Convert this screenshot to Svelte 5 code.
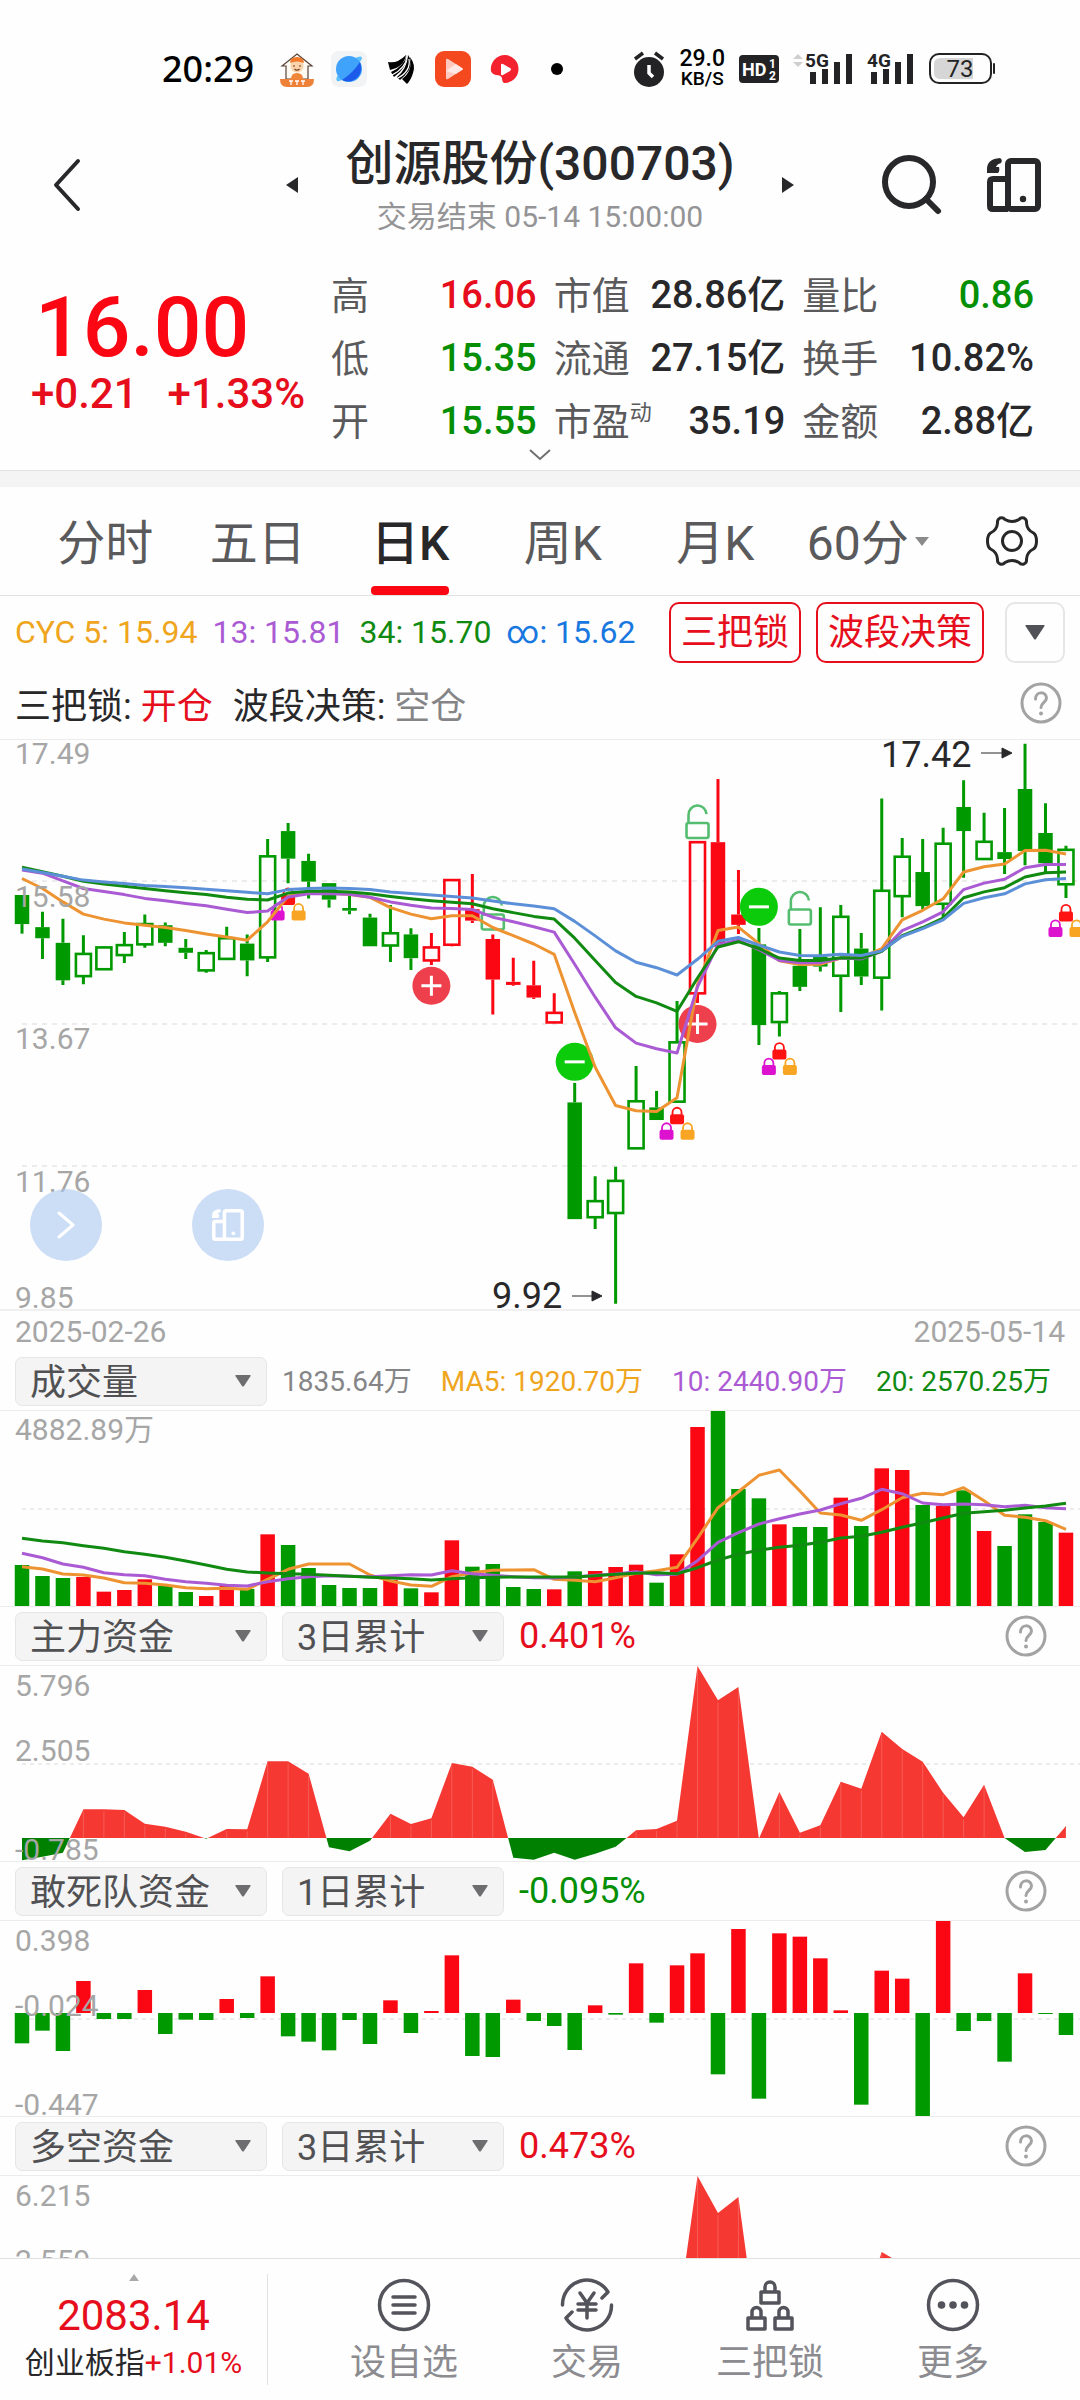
<script>
  const stats = [
    { label: '高', value: '16.06', tone: 'up' },
    { label: '市值', value: '28.86亿', tone: '' },
    { label: '量比', value: '0.86', tone: 'down' },
    { label: '低', value: '15.35', tone: 'down' },
    { label: '流通', value: '27.15亿', tone: '' },
    { label: '换手', value: '10.82%', tone: '' },
    { label: '开', value: '15.55', tone: 'down' },
    { label: '市盈', sup: '动', value: '35.19', tone: '' },
    { label: '金额', value: '2.88亿', tone: '' }
  ];

  const tabs = ['分时', '五日', '日K', '周K', '月K'];
  let activeTab = $state('日K');

  const GREEN = '#009900';
  const RED = '#fb0613';
  const STEP = 20.47;
  const cx = (i) => 22 + i * STEP;
  const line = (ys) => ys.map((v, i) => `${cx(i).toFixed(1)},${v.toFixed(1)}`).join(' ');

  // Depth below the chart's top edge, 1487 steps over the full height
  const ky = (v) => v * 0.3827;

  // kind (lowercase solid, uppercase hollow), high, body top, body bottom, low
  const candles = [
    ['g', 405, 405, 481, 506], ['g', 449, 489, 518, 572], ['g', 467, 530, 628, 640], ['G', 510, 559, 617, 638],
    ['G', 540, 542, 599, 600], ['G', 502, 536, 562, 583], ['G', 456, 481, 534, 543], ['g', 477, 484, 530, 539],
    ['g', 520, 543, 556, 572], ['G', 549, 557, 602, 608], ['G', 488, 518, 572, 573], ['g', 508, 532, 576, 617],
    ['G', 259, 304, 568, 580], ['g', 217, 238, 310, 374], ['g', 297, 316, 370, 414], ['g', 374, 374, 417, 438],
    ['g', 405, 439, 446, 455], ['g', 454, 464, 539, 539], ['G', 431, 505, 537, 580], ['g', 492, 508, 570, 601],
    ['R', 504, 542, 576, 588], ['R', 366, 366, 535, 539], ['r', 350, 442, 472, 478], ['r', 508, 520, 626, 717],
    ['r', 569, 632, 640, 642], ['r', 577, 641, 673, 677], ['R', 662, 713, 738, 740], ['g', 896, 947, 1252, 1252],
    ['G', 1140, 1205, 1247, 1278], ['G', 1115, 1152, 1236, 1473], ['G', 852, 944, 1067, 1068], ['g', 917, 960, 993, 993],
    ['G', 682, 790, 945, 946], ['R', 267, 267, 662, 687], ['r', 102, 267, 540, 540], ['r', 340, 456, 483, 507],
    ['g', 491, 534, 745, 797], ['G', 656, 662, 737, 775], ['g', 494, 590, 645, 656], ['g', 437, 566, 592, 605],
    ['G', 431, 462, 616, 711], ['g', 504, 545, 618, 640], ['G', 153, 394, 621, 707], ['G', 256, 305, 408, 463],
    ['g', 259, 345, 434, 442], ['G', 229, 271, 428, 470], ['g', 105, 175, 238, 360], ['G', 190, 266, 311, 312],
    ['g', 178, 293, 311, 350], ['g', 10, 128, 290, 327], ['g', 165, 243, 322, 350], ['G', 276, 287, 377, 413]
  ].map(([kind, high, top, bottom, low], i) => ({
    x: cx(i),
    hollow: kind === 'G' || kind === 'R',
    color: kind.toLowerCase() === 'g' ? GREEN : RED,
    high: ky(high), top: ky(top), bottom: ky(bottom), low: ky(low)
  }));

  const costLines = [
    { color: '#ee9331', ys: [362, 388, 423, 455, 468, 478, 484, 490, 498, 507, 515, 523, 475, 408, 400, 400, 404, 411, 438, 455, 467, 459, 459, 490, 511, 533, 560, 712, 855, 955, 969, 971, 935, 640, 498, 489, 532, 577, 587, 586, 570, 568, 545, 470, 445, 415, 345, 331, 324, 289, 288, 298] },
    { color: '#aa5bd4', ys: [340, 348, 368, 388, 396, 404, 414, 420, 427, 433, 442, 451, 447, 410, 402, 402, 403, 411, 423, 432, 439, 440, 443, 463, 475, 488, 502, 586, 672, 752, 792, 807, 818, 645, 535, 523, 548, 576, 582, 582, 570, 572, 552, 498, 475, 449, 391, 374, 364, 334, 325, 325] },
    { color: '#118a11', ys: [332, 344, 356, 369, 376, 382, 388, 394, 399, 404, 411, 416, 418, 400, 395, 395, 397, 402, 409, 415, 420, 424, 428, 441, 451, 461, 468, 518, 576, 634, 670, 687, 709, 622, 541, 527, 545, 570, 576, 576, 569, 570, 552, 511, 490, 465, 412, 397, 386, 358, 347, 345] },
    { color: '#5b8fd8', ys: [337, 346, 356, 366, 371, 375, 380, 383, 386, 390, 394, 398, 402, 391, 388, 387, 388, 391, 397, 401, 405, 409, 413, 421, 428, 434, 441, 474, 512, 551, 581, 595, 614, 573, 526, 516, 536, 554, 563, 564, 560, 563, 551, 513, 493, 470, 427, 412, 402, 376, 365, 362] }
  ].map((l) => ({ color: l.color, points: line(l.ys.map(ky)) }));

  const lockGroups = [[13, 384], [32, 957], [37, 788], [51, 427]].map(([i, y]) => ({ x: cx(i), y: ky(y) }));
  const openLocks = [[23, 409], [33, 170], [38, 396]].map(([i, y]) => ({ x: cx(i), y: ky(y) }));
  const signals = [
    { x: cx(20), y: ky(642), buy: true },
    { x: cx(33), y: ky(742), buy: true },
    { x: cx(27), y: ky(841), buy: false },
    { x: cx(36), y: ky(436), buy: false }
  ];

  // Volume: distance from the chart's top edge in thirds of a unit
  const vy = (v) => (v - 363) / 3;
  const volume = [
    ['g', 825], ['g', 858], ['g', 864], ['r', 861], ['r', 905], ['r', 900], ['r', 868], ['g', 888], ['g', 906],
    ['r', 918], ['r', 888], ['g', 897], ['r', 733], ['g', 765], ['g', 834], ['g', 885], ['g', 894], ['g', 894],
    ['r', 870], ['g', 895], ['r', 907], ['r', 751], ['g', 830], ['g', 822], ['g', 891], ['g', 897], ['r', 898],
    ['g', 844], ['r', 843], ['r', 831], ['r', 824], ['g', 878], ['r', 793], ['r', 411], ['g', 363], ['g', 597],
    ['g', 625], ['r', 703], ['g', 711], ['g', 711], ['r', 623], ['g', 708], ['r', 535], ['r', 540], ['g', 645],
    ['r', 648], ['g', 601], ['r', 723], ['g', 768], ['g', 673], ['g', 696], ['r', 728]
  ].map(([k, v], i) => ({ x: cx(i), y: vy(v), color: k === 'g' ? GREEN : RED }));

  const volumeLines = [
    { color: '#ee9331', ys: [830, 837, 852, 855, 864, 878, 880, 885, 893, 896, 895, 898, 868, 838, 822, 822, 822, 855, 873, 885, 889, 860, 848, 841, 840, 839, 868, 871, 875, 863, 850, 842, 832, 745, 653, 605, 556, 540, 603, 669, 675, 691, 659, 623, 610, 614, 593, 632, 676, 682, 692, 718] },
    { color: '#aa5bd4', ys: [790, 803, 822, 832, 848, 854, 857, 868, 875, 880, 886, 888, 875, 866, 860, 857, 859, 860, 857, 854, 855, 842, 851, 856, 860, 863, 864, 861, 856, 852, 845, 854, 853, 812, 757, 728, 702, 686, 672, 660, 641, 625, 598, 611, 639, 644, 642, 644, 650, 646, 653, 656] },
    { color: '#118a11', ys: [745, 753, 758, 767, 775, 785, 793, 802, 813, 825, 838, 846, 849, 851, 853, 856, 859, 862, 864, 866, 870, 866, 863, 862, 861, 861, 861, 861, 857, 853, 850, 848, 851, 833, 810, 793, 781, 772, 766, 757, 744, 739, 727, 712, 698, 684, 670, 665, 661, 654, 648, 640] }
  ].map((l) => ({ color: l.color, points: line(l.ys.map(vy)) }));

  const area = (ys, zero) => `${cx(0)},${zero} ${line(ys)} ${cx(ys.length - 1)},${zero}`;

  const MAIN_ZERO = 172;
  const mainFlow = [751, 740, 728, 598, 598, 600, 641, 650, 665, 686, 657, 658, 454, 454, 491, 712, 724, 692, 611, 642, 625, 459, 470, 509, 743, 749, 728, 749, 731, 710, 661, 657, 632, 168, 271, 231, 686, 546, 668, 646, 515, 536, 365, 417, 455, 548, 622, 524, 684, 726, 720, 648]
    .map((v) => (v - 168) / 3);

  const LONG_ZERO = 166;
  const longFlow = mainFlow.map((v, i) => {
    const peaks = { 32: 146, 33: 0, 34: 37, 35: 21, 36: 172, 41: 138, 42: 76, 43: 88, 44: 101 };
    return i in peaks ? peaks[i] : Math.max(v, 120);
  });

  const DARE_ZERO = 92;
  const dareFlow = [550, 512, 573, 363, 477, 477, 390, 522, 479, 480, 417, 474, 349, 529, 545, 571, 480, 552, 421, 519, 453, 286, 588, 591, 419, 483, 498, 570, 436, 464, 310, 488, 316, 280, 643, 207, 716, 220, 230, 295, 451, 734, 332, 356, 768, 183, 513, 483, 605, 340, 462, 525]
    .map((v, i) => ({ x: cx(i), y: (v - 183) / 3 }));

  dareFlow[20].y = 90;
</script>

{#snippet phoneIcon()}
  <svg viewBox="0 0 54 54" fill="none" stroke="currentColor" stroke-width="6" stroke-linejoin="round" aria-hidden="true">
    <rect x="21" y="3" width="30" height="48" rx="3" />
    <path d="M21 21H6q-3 0-3 3v24q0 3 3 3h15" />
    <circle cx="36" cy="41" r="3.2" fill="currentColor" stroke="none" />
    <path d="M13 0Q0 1 0 11v4h11q2-2 1-6h-3q1-3 5-4 2-3-1-5z" fill="currentColor" stroke="none" />
  </svg>
{/snippet}

{#snippet help()}
  <button class="help" aria-label="说明">
    <svg viewBox="0 0 42 42" fill="none" stroke="#a3a3a3" stroke-width="3" stroke-linecap="round" aria-hidden="true">
      <circle cx="21" cy="21" r="19" />
      <path d="M15.500 17c0-8 11-8 11-1 0 4-5.500 5-5.500 9.500" />
      <circle cx="21" cy="31.500" r="2" fill="#a3a3a3" stroke="none" />
    </svg>
  </button>
{/snippet}

{#snippet picker(label, options, size)}
  <span class="picker {size}">
    <select aria-label={label}>
      {#each options as option}<option>{option}</option>{/each}
    </select>
    <svg viewBox="0 0 16 12" aria-hidden="true"><path d="M1 0h14q1 0 .6 1L9 11q-1 1-2 0L.4 1Q0 0 1 0z" fill="#6d6d6f" /></svg>
  </span>
{/snippet}

{#snippet lock(x, y, color)}
  <rect {x} y={y + 8} width="14" height="10" rx="2" fill={color} />
  <path d="M{x + 2.500} {y + 9}v-3a4.500 4.500 0 0 1 9 0v3" fill="none" stroke={color} stroke-width="1.800" />
{/snippet}

{#snippet flow(id, ys, zero, height)}
  <defs>
    <clipPath id="{id}-in"><rect x="0" y="0" width="1080" height={zero} /></clipPath>
    <clipPath id="{id}-out"><rect x="0" y={zero} width="1080" {height} /></clipPath>
  </defs>
  <polygon points={area(ys, zero)} fill="#f53832" clip-path="url(#{id}-in)" />
  <polygon points={area(ys, zero)} fill="#008000" clip-path="url(#{id}-out)" />
  {#each ys as y, i}
    {#if y < zero - 1}
      <line x1={cx(i)} x2={cx(i)} y1={y + 2} y2={zero} stroke="#fff" stroke-opacity="0.180" />
    {/if}
  {/each}
{/snippet}

<div class="app">
  <div class="status">
    <div class="status-side">
      <span class="clock">20:29</span>
      <svg viewBox="0 0 36 36" aria-hidden="true">
        <path d="M3 15L18 3l15 12h-4v13H7V15z" fill="#fffaf2" stroke="#5a4338" stroke-width="1.200" />
        <circle cx="18" cy="15" r="6.500" fill="#f9d3ac" />
        <path d="M11 12q0-6 7-6t7 6q-7-3-14 0z" fill="#f07a2a" />
        <path d="M14 15h2M20 15h2M15.500 18q2.500 2.500 5 0" stroke="#7a3b1c" stroke-width="1.200" fill="none" />
        <path d="M12 28q0-6 6-6t6 6z" fill="#f0863a" />
        <path d="M1 28h34q0 8-7 8H8q-7 0-7-8z" fill="#ee8137" />
        <path d="M10 30h4M12 30v4M16 30h4M18 30v4M22 30h4M24 30v4" stroke="#fff" stroke-width="1.300" />
      </svg>
      <svg viewBox="0 0 36 36" aria-hidden="true">
        <rect width="36" height="36" rx="8" fill="#f2f3f5" />
        <path d="M6 30q-2-3 2-7l4 5q-4 3-6 2zM24 7q7-3 7 0 0 2-3 5z" fill="#5cc0fd" />
        <circle cx="18" cy="18" r="13" fill="#3fa2fb" />
        <path d="M29 11Q33 23 23 29q-6 3-12 0 11-7 18-18z" fill="#1c5bea" />
      </svg>
      <svg viewBox="0 0 36 36" aria-hidden="true">
        <path d="M5 11q9 2 18-7-2 12-16 15z" fill="#000" />
        <path d="M24 4q0 13-13 22l-3-5Q20 16 24 4z" fill="#000" />
        <path d="M25 4q5 6 1 15-4 6-9 10l-3-3Q24 18 25 4z" fill="#000" />
        <path d="M27 6q6 8 3 16-2 7-6 11l-5-5Q30 20 27 6z" fill="#000" />
        <path d="M24 5Q23 17 9 24M26 8q2 12-11 19" stroke="#fff" stroke-width="1.200" fill="none" />
      </svg>
      <svg viewBox="0 0 36 36" aria-hidden="true">
        <rect width="36" height="36" rx="9" fill="#f4481f" />
        <path d="M11 9q0-2 2-1l14 9q2 1 0 2l-14 9q-2 1-2-1z" fill="#ffc9c0" />
        <path d="M11 20l10-7 6 4q2 1 0 2l-6 4z" fill="#fff" opacity="0.600" />
      </svg>
      <svg viewBox="0 0 36 36" aria-hidden="true">
        <path d="M18 4a14 14 0 1 1-1 28q-2-1-2-5-1-3-6-3-4-1-5-4A14 14 0 0 1 18 4z" fill="#f4222f" />
        <path d="M14 14q0-2 2-1l7 4q2 1 0 3l-7 4q-2 1-2-1z" fill="#fff" />
      </svg>
      <svg viewBox="0 0 36 36" aria-hidden="true"><circle cx="18" cy="18" r="6" fill="#000" /></svg>
    </div>
    <div class="status-side">
      <svg class="alarm" viewBox="0 0 32 36" aria-hidden="true">
        <circle cx="16" cy="21" r="15" fill="#232325" />
        <path d="M2 8l8-6M30 8l-8-6" stroke="#232325" stroke-width="3.500" />
        <path d="M16 14v8l4 4" stroke="#fff" stroke-width="3.500" fill="none" />
      </svg>
      <span class="speed"><b>29.0</b><b class="unit">KB/S</b></span>
      <svg class="hd" viewBox="0 0 40 28" aria-hidden="true">
        <rect width="40" height="28" rx="4" fill="#232325" />
        <text x="3" y="21" font-size="18" font-weight="700" fill="#fff">HD</text>
        <text x="30" y="13" font-size="12" font-weight="700" fill="#fff">1</text>
        <text x="30" y="25" font-size="12" font-weight="700" fill="#fff">2</text>
      </svg>
      <svg class="signal wide" viewBox="0 0 60 34" aria-hidden="true">
        <path d="M0 7l5-5 5 5zM0 10h10l-5 5z" fill="#cfcfcf" />
        <text x="12" y="15" font-size="19" font-weight="700" fill="#232325">5G</text>
        <path d="M17 20h6v12h-6zM29 17h6v15h-6zM41 10h6v22h-6zM53 2h6v30h-6z" fill="#232325" />
      </svg>
      <svg class="signal" viewBox="0 0 48 34" aria-hidden="true">
        <text x="0" y="15" font-size="19" font-weight="700" fill="#232325">4G</text>
        <path d="M4 20h6v12H4zM16 17h6v15h-6zM28 10h6v22h-6zM40 2h6v30h-6z" fill="#232325" />
      </svg>
      <svg class="battery" viewBox="0 0 68 32" aria-hidden="true">
        <rect x="1" y="1" width="61" height="29" rx="9" fill="none" stroke="#232325" stroke-width="2" />
        <path d="M44 5v21H12q-7 0-7-6v-9q0-6 7-6z" fill="#d6d6d6" />
        <rect x="64" y="10" width="2" height="11" rx="1" fill="#232325" />
        <text x="31" y="24" font-size="24" text-anchor="middle" fill="#232325">73</text>
      </svg>
    </div>
  </div>

  <header>
    <button class="back" aria-label="返回">
      <svg viewBox="0 0 30 54" fill="none" stroke="#28282a" stroke-width="4" stroke-linecap="round" stroke-linejoin="round"><path d="M26 3L4 27l22 24" /></svg>
    </button>
    <div class="stock">
      <button class="step" aria-label="上一只"><svg viewBox="0 0 12 18"><path d="M12 1v16L0 9z" fill="#28282a" /></svg></button>
      <div class="names">
        <h1>创源股份(300703)</h1>
        <p>交易结束 05-14 15:00:00</p>
      </div>
      <button class="step" aria-label="下一只"><svg viewBox="0 0 12 18"><path d="M0 1v16l12-8z" fill="#28282a" /></svg></button>
    </div>
    <div class="actions">
      <button class="search" aria-label="搜索">
        <svg viewBox="0 0 62 62" fill="none" stroke="#28282a" stroke-width="6" stroke-linecap="round"><circle cx="28" cy="28" r="24" /><path d="M45 45l12 12" /></svg>
      </button>
      <button class="phone" aria-label="横屏">{@render phoneIcon()}</button>
    </div>
  </header>

  <main>
    <section class="quote">
      <div class="price">
        <strong>16.00</strong>
        <div><span>+0.21</span><span>+1.33%</span></div>
      </div>
      <div class="stats">
        {#each stats as s}
          <div class="stat">
            <span class="name">{s.label}{#if s.sup}<sup>{s.sup}</sup>{/if}</span>
            <span class="value {s.tone}">{s.value}</span>
          </div>
        {/each}
      </div>
      <button class="expand" aria-label="展开">
        <svg viewBox="0 0 22 12" fill="none" stroke="#707072" stroke-width="2"><path d="M1 1l10 9L21 1" /></svg>
      </button>
    </section>

    <nav class="tabs">
      {#each tabs as tab}
        <button class:active={tab === activeTab} onclick={() => (activeTab = tab)}><span>{tab}</span></button>
      {/each}
      <button><span>60分</span><svg class="mini" viewBox="0 0 14 9"><path d="M0 0h14L7 9z" fill="#8a8a8a" /></svg></button>
      <button aria-label="设置">
        <svg class="gear" viewBox="0 0 52 52" fill="none" stroke="#28282a" stroke-width="3" stroke-linejoin="round">
          <path d="M14 3q3-1 5 1.500 7 4 14 0Q35 2 38 3q3 1.500 2.500 5 .5 7 7 10 3 2 3 8t-3 8q-6.500 3-7 10 .5 3.500-2.500 5-3 1-5-1.500-7-4-14 0Q17 50 14 49q-3-1.500-2.500-5-.5-7-7-10-3-2-3-8t3-8q6.500-3 7-10Q11 4.500 14 3z" />
          <circle cx="26" cy="26" r="9.500" />
        </svg>
      </button>
    </nav>

    <div class="indicators">
      <span class="c-orange">CYC 5: 15.94</span>
      <span class="c-purple">13: 15.81</span>
      <span class="c-green">34: 15.70</span>
      <span class="c-blue">∞: 15.62</span>
      <div class="chips">
        <button class="chip">三把锁</button>
        <button class="chip">波段决策</button>
        <button class="more" aria-label="更多指标"><svg viewBox="0 0 20 15"><path d="M1 0h18q1 0 .5 1L11 14q-1 1-2 0L.5 1Q0 0 1 0z" fill="#515158" /></svg></button>
      </div>
    </div>
    <div class="advice">
      <p>三把锁: <span class="up">开仓</span></p>
      <p>波段决策: <span class="muted">空仓</span></p>
      {@render help()}
    </div>

    <figure class="kline">
      <svg viewBox="0 0 1080 569" role="img" aria-label="日K线">
        {#each [141, 284, 426] as y}
          <line x1="22" x2="1080" y1={y} y2={y} stroke="#ececec" stroke-width="2" stroke-dasharray="5 5" />
        {/each}
        {#each candles as c}
          <path d="M{c.x} {c.high}V{c.top}M{c.x} {c.bottom}V{c.low}" stroke={c.color} stroke-width="3" />
          {#if c.hollow}
            <rect x={c.x - 7.500} y={c.top} width="15" height={c.bottom - c.top} fill="none" stroke={c.color} stroke-width="2.600" />
          {:else}
            <rect x={c.x - 7.250} y={c.top} width="14.500" height={Math.max(c.bottom - c.top, 2)} fill={c.color} />
          {/if}
        {/each}
        {#each lockGroups as g}
          {@render lock(g.x - 7, g.y, '#ff1212')}
          {@render lock(g.x - 17.500, g.y + 15.500, '#dd12cf')}
          {@render lock(g.x + 3.500, g.y + 15.500, '#f7a523')}
        {/each}
        {#each openLocks as o}
          <g fill="none" stroke="#55bd70" stroke-width="2.600">
            <rect x={o.x - 11} y={o.y + 18} width="22" height="15" rx="2" />
            <path d="M{o.x - 9} {o.y + 18}v-8a9 9 0 0 1 18 -1" />
          </g>
        {/each}
        {#each signals as s}
          <circle cx={s.x} cy={s.y} r="19" fill={s.buy ? '#ee404c' : '#0bcb0b'} />
          <path d="M{s.x - 10} {s.y}h20{s.buy ? `M${s.x} ${s.y - 10}v20` : ''}" stroke="#fff" stroke-width="3" />
        {/each}
        {#each costLines as l}
          <polyline points={l.points} fill="none" stroke={l.color} stroke-width="3" stroke-linejoin="round" />
        {/each}
        <g class="axis">
          <text x="15" y="24">17.49</text>
          <text x="15" y="167">15.58</text>
          <text x="15" y="309">13.67</text>
          <text x="15" y="452">11.76</text>
          <text x="15" y="568">9.85</text>
        </g>
        <g class="extreme">
          <text x="881" y="27">17.42</text>
          <path d="M981 13h22" />
          <path d="M1002 8l10 5-10 5z" />
          <text x="492" y="568">9.92</text>
          <path d="M572 556h22" />
          <path d="M592 551l10 5-10 5z" />
        </g>
      </svg>
      <div class="floating">
        <button aria-label="下一步"><svg viewBox="0 0 18 28" fill="none" stroke="#fff" stroke-width="3" stroke-linecap="round" stroke-linejoin="round"><path d="M2 2l14 12L2 26" /></svg></button>
        <button class="rotate" aria-label="横屏">{@render phoneIcon()}</button>
      </div>
    </figure>

    <div class="dates"><span>2025-02-26</span><span>2025-05-14</span></div>

    <section class="panel">
      <div class="panel-head">
        {@render picker('指标', ['成交量'], 'large')}
        <div class="averages">
          <span class="muted">1835.64万</span>
          <span class="c-orange">MA5: 1920.70万</span>
          <span class="c-purple">10: 2440.90万</span>
          <span class="c-green">20: 2570.25万</span>
        </div>
      </div>
      <svg class="plot" viewBox="0 0 1080 195" role="img" aria-label="成交量">
        <line x1="22" x2="1080" y1="98" y2="98" stroke="#ececec" stroke-width="2" stroke-dasharray="4 4" />
        {#each volume as v}<rect x={v.x - 7.250} y={v.y} width="14.500" height={195 - v.y} fill={v.color} />{/each}
        {#each volumeLines as l}<polyline points={l.points} fill="none" stroke={l.color} stroke-width="3" stroke-linejoin="round" />{/each}
        <g class="axis"><text x="15" y="29">4882.89万</text></g>
      </svg>
    </section>

    <section class="panel">
      <div class="panel-head">
        {@render picker('指标', ['主力资金'], 'large')}
        {@render picker('周期', ['3日累计', '1日累计'], 'small')}
        <span class="reading up">0.401%</span>
        {@render help()}
      </div>
      <svg class="plot" viewBox="0 0 1080 195" role="img" aria-label="主力资金">
        <line x1="22" x2="1080" y1="98" y2="98" stroke="#ececec" stroke-width="2" stroke-dasharray="4 4" />
        {@render flow('main', mainFlow, MAIN_ZERO, 23)}
        <g class="axis"><text x="15" y="30">5.796</text><text x="15" y="95">2.505</text><text x="15" y="194">-0.785</text></g>
      </svg>
    </section>

    <section class="panel">
      <div class="panel-head">
        {@render picker('指标', ['敢死队资金'], 'large')}
        {@render picker('周期', ['1日累计', '3日累计'], 'small')}
        <span class="reading down">-0.095%</span>
        {@render help()}
      </div>
      <svg class="plot" viewBox="0 0 1080 195" role="img" aria-label="敢死队资金">
        <line x1="22" x2="1080" y1="98" y2="98" stroke="#ececec" stroke-width="2" stroke-dasharray="4 4" />
        {#each dareFlow as d}
          <rect x={d.x - 7.250} y={Math.min(d.y, DARE_ZERO)} width="14.500" height={Math.abs(d.y - DARE_ZERO)} fill={d.y < DARE_ZERO ? RED : GREEN} />
        {/each}
        <g class="axis"><text x="15" y="30">0.398</text><text x="15" y="95">-0.024</text><text x="15" y="194">-0.447</text></g>
      </svg>
    </section>

    <section class="panel">
      <div class="panel-head">
        {@render picker('指标', ['多空资金'], 'large')}
        {@render picker('周期', ['3日累计', '1日累计'], 'small')}
        <span class="reading up">0.473%</span>
        {@render help()}
      </div>
      <svg class="plot" viewBox="0 0 1080 195" role="img" aria-label="多空资金">
        <line x1="22" x2="1080" y1="98" y2="98" stroke="#ececec" stroke-width="2" stroke-dasharray="4 4" />
        {@render flow('long', longFlow, LONG_ZERO, 29)}
        <g class="axis"><text x="15" y="30">6.215</text><text x="15" y="95">2.559</text><text x="15" y="194">-1.097</text></g>
      </svg>
    </section>
  </main>

  <footer>
    <button class="index">
      <svg viewBox="0 0 14 10"><path d="M7 0l7 10H0z" fill="#a8a8a8" /></svg>
      <strong>2083.14</strong>
      <span>创业板指<span class="up">+1.01%</span></span>
    </button>
    <nav class="tools">
      <button>
        <svg viewBox="0 0 54 54" fill="none" stroke="#53535b" stroke-width="3.500" stroke-linecap="round"><circle cx="27" cy="27" r="24.500" /><path d="M16 19h22M16 27h22M16 35h22" /></svg>
        <span>设自选</span>
      </button>
      <button>
        <svg viewBox="0 0 54 54" fill="none" stroke="#53535b" stroke-width="3.500" stroke-linecap="round" stroke-linejoin="round">
          <path d="M2.500 27A24.500 24.500 0 0 1 48 14l-6 6M51.500 27A24.500 24.500 0 0 1 6 40l6-6" />
          <path d="M20 15l7 10 7-10M18 26h18M18 32h18M27 26v14" />
        </svg>
        <span>交易</span>
      </button>
      <button>
        <svg viewBox="0 0 54 54" fill="none" stroke="#53535b" stroke-width="3.500" stroke-linejoin="round">
          <path d="M18 14h18v11H18zM22 14V9a5 5 0 0 1 10 0v5" />
          <path d="M5 40h17v11H5zM9 40v-6a4.500 4.500 0 0 1 9 0v6" />
          <path d="M32 40h17v11H32zM36 40v-6a4.500 4.500 0 0 1 9 0v6" />
        </svg>
        <span>三把锁</span>
      </button>
      <button>
        <svg viewBox="0 0 54 54" fill="none" stroke="#53535b" stroke-width="3.500"><circle cx="27" cy="27" r="24.500" /><g fill="#53535b" stroke="none"><circle cx="15.500" cy="27" r="3.800" /><circle cx="27" cy="27" r="3.800" /><circle cx="38.500" cy="27" r="3.800" /></g></svg>
        <span>更多</span>
      </button>
    </nav>
  </footer>
</div>

<style>
  :global(body) { margin: 0; background: #fefefe; }
  .app {
    display: flex;
    flex-direction: column;
    height: 100vh;
    color: #28282a;
    font-family: Roboto, "Noto Sans CJK SC", sans-serif;
    background: #fefefe;
  }
  button { padding: 0; border: 0; background: none; font: inherit; color: inherit; cursor: pointer; }
  svg { display: block; }
  h1, p, figure { margin: 0; }

  .up { color: #e60e1c; }
  .down { color: #058f05; }
  .muted { color: #858587; }
  .c-orange { color: #efa51d; }
  .c-purple { color: #aa5bd4; }
  .c-green { color: #118a11; }
  .c-blue { color: #1878e0; }

  .status { display: flex; justify-content: space-between; flex: none; padding: 28px 83px 0 162px; height: 82px; }
  .status-side { display: flex; align-items: center; gap: 16px; color: #000; }
  .status-side svg { width: 36px; height: 36px; flex: none; overflow: visible; }
  .status-side .alarm { width: 32px; }
  .status-side .hd { width: 40px; height: 28px; }
  .status-side .signal { width: 48px; height: 34px; }
  .status-side .wide { width: 60px; }
  .status-side .battery { width: 68px; height: 32px; }
  .status-side:last-child { gap: 14px; }
  .clock { margin-right: 9px; font: 500 36px/48px "Noto Sans", sans-serif; }
  .speed { display: flex; flex-direction: column; align-items: center; font-size: 23px; line-height: 20px; }
  .speed b { font-weight: 500; }
  .speed .unit { font-size: 19px; line-height: 20px; }

  header { display: grid; grid-template-columns: 1fr 508px 1fr; align-items: center; flex: none; height: 130px; padding-top: 10px; }
  .back { justify-self: start; margin-left: 52px; }
  .back svg { width: 30px; height: 54px; }
  .stock { display: flex; align-items: center; justify-content: space-between; }
  .step svg { width: 12px; height: 18px; }
  .names { text-align: center; }
  h1 { font-size: 48px; line-height: 64px; font-weight: 500; white-space: nowrap; }
  .names p { font-size: 30px; line-height: 42px; color: #949496; }
  .actions { display: flex; align-items: center; gap: 44px; justify-self: end; margin-right: 39px; }
  .search svg { width: 62px; height: 62px; }
  .phone svg { width: 54px; height: 54px; }

  main { flex: 1; min-height: 0; overflow: auto; scrollbar-width: none; }

  .quote {
    position: relative;
    display: grid;
    grid-template-columns: 331px 1fr;
    padding: 14px 46px 17px 0;
    border-bottom: 1px solid #e2e2e2;
  }
  .price { padding: 22px 0 0 31px; color: #fb0613; font-weight: 500; }
  .price strong { display: block; padding-left: 4px; font-size: 84px; line-height: 84px; font-weight: 500; }
  .price div { display: flex; gap: 30px; font-size: 42px; line-height: 48px; color: #e60e1c; }
  .stats { display: grid; grid-template-columns: 206fr 232fr 232fr; column-gap: 17px; }
  .stat { display: flex; justify-content: space-between; font-size: 38px; line-height: 63px; white-space: nowrap; }
  .name { display: flex; padding-top: 2px; line-height: 61px; color: #5a5a5c; }
  .name sup { font-size: 22px; line-height: 42px; }
  .value { font-weight: 500; }
  .expand { position: absolute; left: 50%; bottom: 9px; margin-left: -11px; }
  .expand svg { width: 22px; height: 12px; }

  .tabs {
    display: grid;
    grid-template-columns: repeat(6, 1fr) 136px;
    height: 108px;
    padding-left: 29px;
    border-top: 16px solid #f4f4f4;
    border-bottom: 1px solid #e2e2e2;
  }
  .tabs button { position: relative; display: flex; align-items: center; justify-content: center; gap: 6px; font-size: 48px; line-height: 64px; color: #5a5a5c; }
  .tabs span { padding-top: 5px; }
  .tabs .active { color: #28282a; font-weight: 500; }
  .tabs .active::after { content: ""; position: absolute; bottom: 0; width: 78px; height: 9px; border-radius: 4px; background: #fb0613; }
  .mini { width: 14px; height: 9px; }
  .gear { width: 52px; height: 52px; }

  .indicators { display: flex; align-items: center; gap: 15px; height: 72px; padding: 0 15px; font-size: 32px; white-space: nowrap; }
  .chips { display: flex; gap: 15px; margin-left: auto; }
  .chip { padding: 0 10px; height: 61px; border: 2px solid #e60e1c; border-radius: 10px; font-size: 36px; line-height: 59px; color: #e60e1c; box-sizing: border-box; }
  .more { display: flex; align-items: center; justify-content: center; width: 60px; height: 61px; margin-left: 6px; border: 2px solid #e6e6e6; border-radius: 10px; box-sizing: border-box; }
  .more svg { width: 20px; height: 15px; }
  .advice { display: flex; align-items: center; gap: 20px; height: 69px; padding: 0 18px 2px 15px; font-size: 36px; border-bottom: 1px solid #ececec; }
  .help { margin-left: auto; }
  .help svg { width: 42px; height: 42px; }

  .kline { position: relative; border-bottom: 2px solid #f0f0f0; }
  .kline > svg, .plot { width: 100%; height: auto; }
  .kline > svg { overflow: visible; }
  .axis { font-size: 30px; fill: #a6a6a6; }
  .extreme { font-size: 36px; fill: #28282a; }
  .extreme path { stroke: #28282a; stroke-width: 1; }
  .floating { position: absolute; left: 30px; bottom: 48px; display: flex; gap: 90px; }
  .floating button { display: flex; align-items: center; justify-content: center; width: 72px; height: 72px; border-radius: 50%; background: rgba(170, 198, 240, 0.6); color: #fff; }
  .floating svg { width: 18px; height: 28px; }
  .floating .rotate svg { width: 32px; height: 32px; }
  .dates { display: flex; justify-content: space-between; padding: 0 15px; font-size: 30px; line-height: 41px; color: #a6a6a6; }

  .panel-head { display: flex; align-items: center; gap: 15px; height: 58px; padding: 0 33px 0 15px; border-bottom: 1px solid #ececec; }
  .plot { border-bottom: 1px solid #ececec; }
  .picker { position: relative; flex: none; }
  .picker select {
    appearance: none;
    display: block;
    width: 100%;
    height: 49px;
    padding: 4px 0 0 14px;
    border: 1px solid #e6e6e6;
    border-radius: 7px;
    background: #f4f4f4;
    color: #515154;
    font: 36px/43px Roboto, "Noto Sans CJK SC", sans-serif;
  }
  .picker svg { position: absolute; right: 16px; top: 18px; width: 16px; height: 12px; pointer-events: none; }
  .large { width: 252px; }
  .small { width: 222px; }
  .averages { display: flex; gap: 29px; padding-bottom: 4px; font-size: 28px; white-space: nowrap; }
  .reading { font-size: 36px; }

  footer { display: flex; flex: none; height: 141px; border-top: 1px solid #e2e2e2; background: #fefefe; }
  .index { display: flex; flex-direction: column; align-items: center; width: 268px; margin: 15px 0; border-right: 1px solid #e2e2e2; font-size: 30px; line-height: 44px; white-space: nowrap; }
  .index svg { width: 12px; height: 8px; }
  .index strong { margin-top: 10px; font-size: 42px; line-height: 50px; font-weight: 400; color: #e60e1c; }
  .tools { display: flex; flex: 1; justify-content: space-between; padding: 0 91px 0 82px; }
  .tools button { display: flex; flex-direction: column; align-items: center; padding-top: 19px; font-size: 36px; line-height: 54px; color: #8b8b90; align-self: flex-start; }
  .tools svg { width: 54px; height: 54px; }
  .tools span { margin-top: 4px; }
</style>
